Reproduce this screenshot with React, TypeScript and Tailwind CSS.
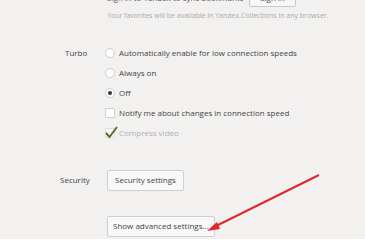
export default function App() {
  const font = { fontFamily: '"Open Sans", "Liberation Sans", sans-serif' };
  return (
    <div
      className="relative w-[365px] h-[247px] overflow-hidden bg-[#f2f1f0] text-[8px] text-[#444]"
      style={font}
    >
      <div className="ml-[107px] -mt-[11px] flex items-center gap-[6px]">
        <span className="text-[#555]">Sign in to Yandex to sync bookmarks</span>
        <button className="h-[18px] px-[10px] border border-[#c8c8c8] bg-[#f7f7f7] rounded-[2px]">Sign in</button>
      </div>
      <div className="ml-[107px] mt-[4px] text-[7px] text-[#aaa]">
        Your favorites will be available in Yandex.Collections in any browser.
      </div>

      <div className="mt-[21px] flex">
        <div className="w-[105px] pl-[65px] h-[20px] flex items-center">Turbo</div>
        <div className="flex flex-col">
          {[
            ["Automatically enable for low connection speeds", false],
            ["Always on", false],
            ["Off", true],
          ].map(([label, on]) => (
            <div key={label as string} className="h-[20px] flex items-center gap-[4px]">
              <span className="w-[10px] h-[10px] rounded-full border border-[#cfcfcf] bg-white flex items-center justify-center">
                {on && <span className="w-[4px] h-[4px] rounded-full bg-[#333]" />}
              </span>
              <span>{label as string}</span>
            </div>
          ))}
          <div className="h-[20px] flex items-center gap-[4px]">
            <span className="w-[10px] h-[10px] rounded-[1px] border border-[#cfcfcf] bg-white" />
            <span>Notify me about changes in connection speed</span>
          </div>
          <div className="h-[20px] flex items-center gap-[4px] text-[#b0b0b0]">
            <span className="relative w-[10px] h-[10px] rounded-[1px] border border-[#dcdcdc] bg-[#f6f6f6]">
              <svg className="absolute -top-[3px] -left-[1px]" width="13" height="13" viewBox="0 0 13 13">
                <path d="M1 7 L4.5 11 L12 1" fill="none" stroke="#5d6b2d" strokeWidth="2" />
              </svg>
            </span>
            <span>Compress video</span>
          </div>
        </div>
      </div>

      <div className="mt-[27px] flex items-center">
        <div className="w-[107px] pl-[60px]">Security</div>
        <button className="h-[21px] px-[7px] border border-[#cfcfcf] bg-[#f8f8f8] rounded-[2px]">Security settings</button>
      </div>

      <div className="mt-[25px] ml-[107px]">
        <button className="h-[21px] px-[5px] border border-[#cfcfcf] bg-[#f8f8f8] rounded-[2px]">Show advanced settings...</button>
      </div>
      <div className="mt-[2px] h-[10px] bg-white" />

      <svg className="absolute left-0 top-0" width="365" height="247">
        <line x1="319" y1="175" x2="214" y2="227" stroke="#e3262b" strokeWidth="2" />
        <path d="M207 231 L217 222 L220 229 Z" fill="#e3262b" />
      </svg>
    </div>
  );
}
